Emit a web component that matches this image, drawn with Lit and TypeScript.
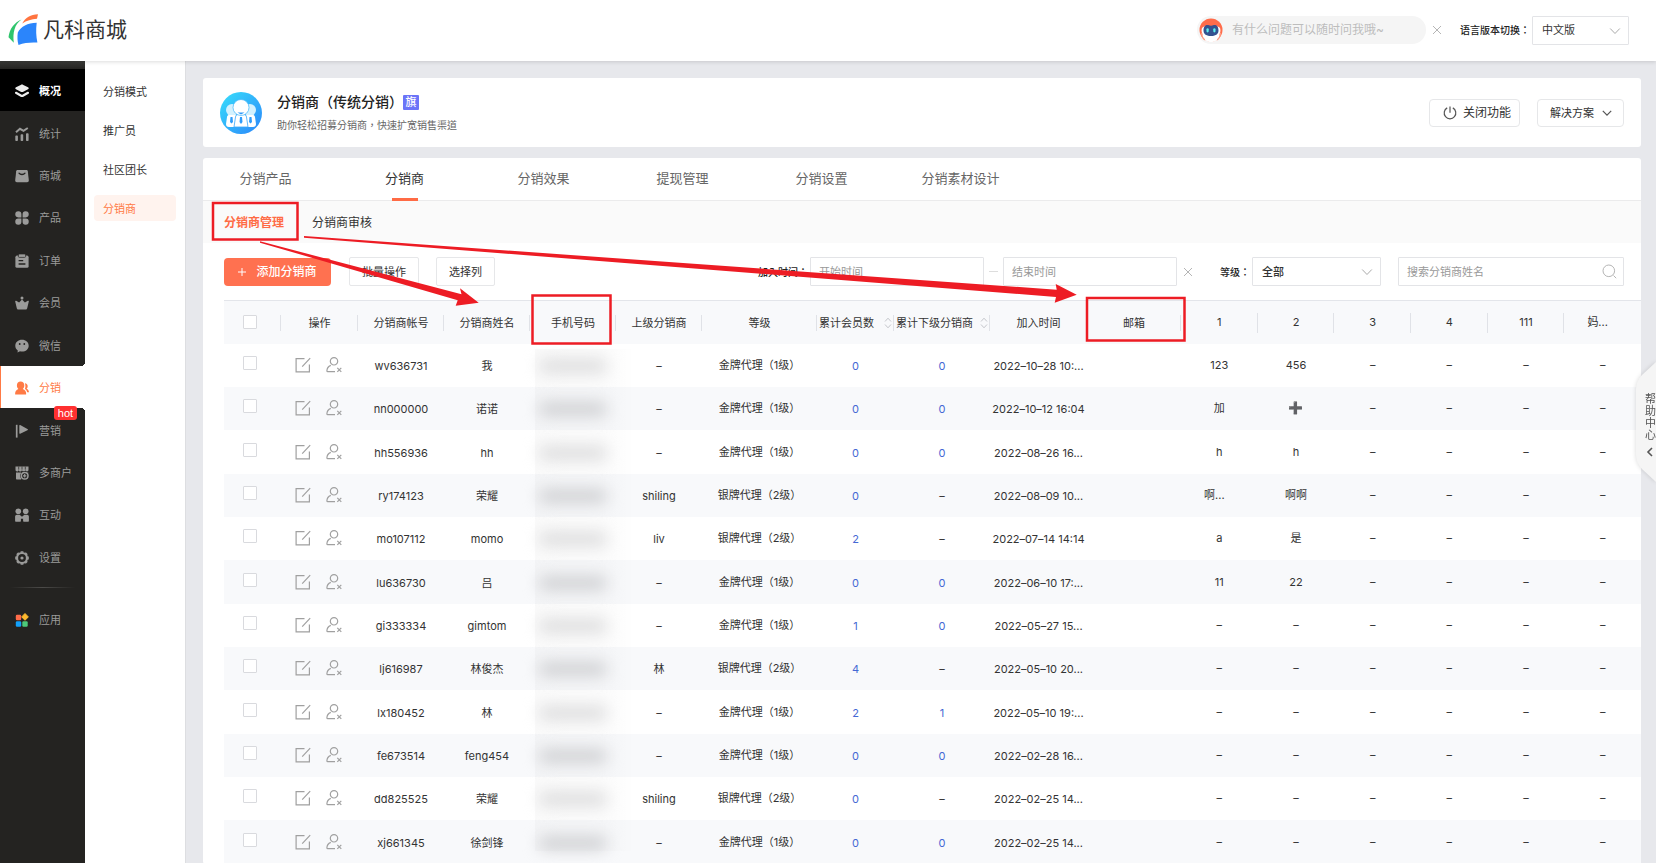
import { LitElement, html, css, svg, nothing } from 'lit';
import { customElement, property } from 'lit/decorators.js';
import { classMap } from 'lit/directives/class-map.js';

const ICONS: Record<string, unknown> = {
  overview: svg`<path d="M7 .6c.4 0 .9.1 1.300.300L13 3.300c1 .5 1 1.500 0 2L8.300 7.700c-.8.4-1.800.4-2.600 0L1 5.300c-1-.5-1-1.500 0-2L5.700.900C6.100.700 6.600.600 7 .600z" fill="currentColor"/><path d="M1 8.800l4.700 2.700c.8.5 1.800.5 2.600 0L13 8.800" fill="none" stroke="currentColor" stroke-width="2.200" stroke-linecap="round"/>`,
  stats: svg`<path d="M1 5.200L5 1.800l3.500 2L12.800 1" fill="none" stroke="currentColor" stroke-width="2"/><rect x=".3" y="8.600" width="2.600" height="5.400" rx=".8" fill="currentColor"/><rect x="5.600" y="7.300" width="2.600" height="6.700" rx=".8" fill="currentColor"/><rect x="11" y="6.200" width="2.600" height="7.800" rx=".8" fill="currentColor"/>`,
  mall: svg`<path d="M2.700 1h8.600c.8 0 1.400.5 1.500 1.300l1 9c.1 1.200-.6 2-1.700 2H1.900c-1.100 0-1.800-.8-1.700-2l1-9C1.300 1.500 1.900 1 2.700 1z" fill="currentColor"/><path d="M4 4.200c1.400 1.700 4.600 1.700 6 0" fill="none" stroke="#242321" stroke-width="1.300" stroke-linecap="round"/>`,
  product: svg`<g fill="currentColor"><path d="M3.300.3a3 3 0 013.100 3v3.100H3.300a3 3 0 010-6.100zM10.700.3a3 3 0 010 6.100H7.600V3.300a3 3 0 013.100-3zM3.300 13.700a3 3 0 010-6.100h3.100v3.100a3 3 0 01-3.100 3zM10.700 13.700a3 3 0 01-3.100-3V7.600h3.100a3 3 0 010 6.100z"/></g>`,
  order: svg`<rect x=".4" y="1.600" width="13.200" height="12.200" rx="1.600" fill="currentColor"/><rect x="3.400" y="0" width="7.200" height="3.400" rx="1" fill="currentColor" stroke="#242321" stroke-width=".7"/><path d="M3.600 6.600h4.600M3.600 10h6.800" stroke="#242321" stroke-width="1.400"/>`,
  member: svg`<circle cx="7" cy="1.900" r="1.500" fill="currentColor"/><path d="M1.200 4.800l2.900 1.800L7 3.600l2.900 3 2.900-1.800c.7-.3 1.200.1 1 .8l-1.600 6.600c-.2.900-.7 1.400-1.600 1.400H3.400c-.9 0-1.400-.5-1.600-1.400L.2 5.600c-.2-.7.300-1.100 1-.8z" fill="currentColor"/>`,
  wechat: svg`<path d="M7 .8c3.800 0 6.700 2.500 6.700 5.900S10.800 12.600 7 12.600c-.7 0-1.400-.1-2-.3l-2.500 1.300.3-2.200C1.200 10.300.3 8.600.3 6.700.3 3.300 3.200.8 7 .8z" fill="currentColor"/><circle cx="4.700" cy="5" r=".9" fill="#242321"/><circle cx="9.300" cy="5" r=".9" fill="#242321"/>`,
  distribution: svg`<path d="M5.600.4c2.200 0 3.700 1.600 3.700 3.800 0 1.600-.6 2.900-1.500 3.800 2.100.8 3.300 1.900 3.400 5 0 .4-.2.600-.6.600H.7c-.4 0-.6-.2-.6-.6C.2 9.900 1.400 8.800 3.400 8 2.500 7.100 1.900 5.800 1.900 4.200 1.900 2 3.400.4 5.600.4z" fill="currentColor"/><path d="M9.900 2.300c1.700.2 2.800 1.300 2.800 2.900 0 1-.4 1.900-1.100 2.600 1.400.6 2.200 1.500 2.400 3.400h-1.800c-.3-1.600-1.100-2.600-2.300-3.300.6-1.200.8-3.400 0-5.600z" fill="currentColor"/>`,
  marketing: svg`<path d="M1.700.8v12.800" stroke="currentColor" stroke-width="1.700"/><path d="M4.300 1.500c0-.5.400-.7.900-.5l7.200 4c.7.4.7.900 0 1.300L5.200 9.700c-.5.3-.9 0-.9-.4z" fill="currentColor"/>`,
  merchants: svg`<path d="M.5.600h13v3.200c0 .9-.7 1.700-1.600 1.700s-1.600-.6-1.600-1.500c0 .9-.8 1.500-1.700 1.500S7 4.900 7 4c0 .9-.8 1.500-1.700 1.500S3.700 4.900 3.700 4c0 .9-.7 1.500-1.600 1.500S.5 4.700.5 3.800z" fill="currentColor"/><path d="M3.700.6v3M7 .6v3M10.300.6v3" stroke="#242321" stroke-width=".7"/><path d="M1 6.500h5.200v7H2c-.6 0-1-.4-1-1z" fill="currentColor"/><path d="M11 6.200h2.200V8H11z" fill="currentColor"/><circle cx="9.700" cy="9.800" r="4.500" fill="#242321"/><circle cx="9.700" cy="9.800" r="3.300" fill="none" stroke="currentColor" stroke-width="1.500"/><path d="M8 9.800h3.400M9.700 8.100v3.400" stroke="currentColor" stroke-width="1.200"/>`,
  interact: svg`<g fill="currentColor"><circle cx="3.300" cy="3.200" r="2.800"/><circle cx="10.700" cy="3.200" r="2.800"/><path d="M2 6.700h2.600l2.400 2 2.400-2H12c1.100 0 1.900.8 1.900 1.900v4.100c0 .6-.4 1-1 1H9.100c-.6 0-1-.4-1-1v-1.900H5.900v1.900c0 .6-.4 1-1 1H1.100c-.6 0-1-.4-1-1V8.600c0-1.100.8-1.900 1.900-1.900z"/></g>`,
  settings: svg`<circle cx="7" cy="7" r="5" fill="none" stroke="currentColor" stroke-width="2.200"/><g stroke="currentColor" stroke-width="2.800"><path d="M7 .2v1.600M7 12.200v1.600M.2 7h1.600M12.200 7h1.600M2.200 2.200l1.100 1.100M10.700 10.700l1.100 1.100M11.800 2.200l-1.100 1.100M3.300 10.700l-1.100 1.100"/></g><circle cx="7" cy="7" r="1.600" fill="currentColor"/>`,
  apps: svg`<rect x=".8" y="1.800" width="5.400" height="5.400" rx="1.200" fill="#ff6c4a"/><path d="M10 .5l3.300 3.400L10 7.300 6.700 3.900z" fill="#fdb92e" stroke="#fdb92e" stroke-linejoin="round"/><rect x=".8" y="8.300" width="5.400" height="5.400" rx="1.200" fill="#12a0fa"/><rect x="7.300" y="8.300" width="5.400" height="5.400" rx="1.200" fill="#4cc97a"/>`,
};

@customElement('side-nav')
export class SideNav extends LitElement {
  static styles = css`
    :host { display: block; width: 85px; flex: none; background: #242321; color: #9b9b9a; }
    .list { list-style: none; margin: 0; padding: 8px 0 0; height: 517px; box-sizing: border-box;
      display: grid; grid-auto-rows: 1fr; background: linear-gradient(#3a3a38, #242321 8px); }
    .cell { display: grid; position: relative; }
    a { display: flex; align-items: center; gap: 10px; padding: 2px 0 0 15px; color: inherit;
      text-decoration: none; font-size: 11px; line-height: 16px; white-space: nowrap; }
    svg { width: 14px; height: 14px; flex: none; }
    .first a { background: #000; color: #fff; font-weight: 700; }
    .first svg { color: #ececec; }
    .current { background: #fff; }
    .current a { color: #ff7a45; border-left: 1px solid #ff7a45; padding-left: 14px; }
    .current::before, .current::after { content: ''; position: absolute; right: 0; width: 4px; height: 4px; }
    .current::before { top: -4px; background: radial-gradient(circle at 0 0, transparent 4px, #fff 4px); }
    .current::after { bottom: -4px; background: radial-gradient(circle at 0 100%, transparent 4px, #fff 4px); }
    .hot { position: absolute; top: -2px; left: 54px; width: 23px; height: 14px; border-radius: 3px; z-index: 1;
      background: #ff3030; color: #fff; text-align: center; font: 11px/14px "Liberation Sans", sans-serif; }
    .rule { height: 1px; border: 0; margin: 9px 10px 8px; background: linear-gradient(90deg, transparent, #4c4b49, transparent); }
    .apps { display: flex; height: 44px; }
  `;
  private items = [
    ['overview', '概况'], ['stats', '统计'], ['mall', '商城'], ['product', '产品'], ['order', '订单'],
    ['member', '会员'], ['wechat', '微信'], ['distribution', '分销'], ['marketing', '营销'],
    ['merchants', '多商户'], ['interact', '互动'], ['settings', '设置'],
  ];
  private icon(name: string) {
    return html`<svg viewBox="0 0 14 14" aria-hidden="true">${ICONS[name]}</svg>`;
  }
  render() {
    return html`<nav aria-label="主导航">
      <ul class="list">
        ${this.items.map(([id, label], i) => html`
          <li class=${classMap({ cell: true, first: i === 0, current: id === 'distribution' })}>
            <a href="#${id}">${this.icon(id)}${label}</a>
            ${id === 'marketing' ? html`<span class="hot">hot</span>` : nothing}
          </li>`)}
      </ul>
      <hr class="rule">
      <a class="apps" href="#apps">${this.icon('apps')}应用</a>
    </nav>`;
  }
}

interface Agent {
  account: string; name: string; parent: string; level: string;
  members: number; subs: string; joined: string; extra: string[];
}
const GOLD = '金牌代理（1级）';
const SILVER = '银牌代理（2级）';
const row = (account: string, name: string, parent: string, level: string, members: number,
  subs: string, joined: string, a = '–', b = '–'): Agent =>
  ({ account, name, parent, level, members, subs, joined, extra: [a, b, '–', '–', '–', '–'] });

const AGENTS: Agent[] = [
  row('wv636731', '我', '–', GOLD, 0, '0', '2022–10–28 10:...', '123', '456'),
  row('nn000000', '诺诺', '–', GOLD, 0, '0', '2022–10–12 16:04', '加', '➕'),
  row('hh556936', 'hh', '–', GOLD, 0, '0', '2022–08–26 16...', 'h', 'h'),
  row('ry174123', '荣耀', 'shiling', SILVER, 0, '–', '2022–08–09 10...', '啊...', '啊啊'),
  row('mo107112', 'momo', 'liv', SILVER, 2, '–', '2022–07–14 14:14', 'a', '是'),
  row('lu636730', '吕', '–', GOLD, 0, '0', '2022–06–10 17:...', '11', '22'),
  row('gi333334', 'gimtom', '–', GOLD, 1, '0', '2022–05–27 15...'),
  row('lj616987', '林俊杰', '林', SILVER, 4, '–', '2022–05–10 20...'),
  row('lx180452', '林', '–', GOLD, 2, '1', '2022–05–10 19:...'),
  row('fe673514', 'feng454', '–', GOLD, 0, '0', '2022–02–28 16...'),
  row('dd825525', '荣耀', 'shiling', SILVER, 0, '–', '2022–02–25 14...'),
  row('xj661345', '徐剑锋', '–', GOLD, 0, '0', '2022–02–25 14...'),
];

@customElement('agent-table')
export class AgentTable extends LitElement {
  @property({ attribute: false }) rows: Agent[] = AGENTS;
  static styles = css`
    :host { display: block; border-top: 1px solid #e3e5ea; }
    table { width: 100%; table-layout: fixed; border-collapse: collapse; font-size: 11px; line-height: 16px; color: #333; }
    th, td { padding: 0; font-weight: 400; text-align: center; white-space: nowrap; }
    td { padding-top: 1px; }
    .head { height: 43px; background: #f8f9fb; }
    .head th { background: linear-gradient(#e0e2e7, #e0e2e7) right center / 1px 16px no-repeat; }
    .head .custom { background-size: 1px 20px; padding-bottom: 2px; }
    .head th:last-child, .head .joined { background: none; }
    tbody tr { height: 43px; }
    tbody tr:nth-child(3n) { height: 44px; }
    tbody tr:nth-child(even) { background: #f8f9fb; }
    .pick { width: 57px; } .ops { width: 77px; } .text { width: 86px; } .level { width: 115px; }
    .members { width: 77px; } .subs { width: 96px; } .joined { width: 97px; } .mail { width: 94px; }
    .raised { padding-bottom: 2px; }
    .cut { display: inline-block; padding-right: 10px; }
    input { appearance: none; display: inline-block; vertical-align: middle; width: 14px; height: 14px; margin: 0 6px 2px 0;
      border: 1px solid #d9dade; border-radius: 1px; background: #fff; }
    td input { margin: 0 6px 6px 0; }
    .tools { display: flex; justify-content: center; gap: 15px; padding-right: 2px; }
    .tool { border: 0; padding: 0; background: none; width: 16px; height: 16px; color: #a0a0a0; }
    .tool svg { display: block; width: 16px; height: 16px; fill: none; stroke: currentColor; stroke-width: 1.2; }
    .sortable { display: flex; align-items: center; justify-content: space-between; padding: 0 2px; }
    .sort { border: 0; padding: 0; background: none; width: 8px; height: 12px; }
    .sort svg { display: block; width: 8px; height: 12px; fill: none; stroke: #c4c6cb; }
    .count { color: #4568d4; text-decoration: none; }
    .plus { font-family: "DejaVu Sans", sans-serif; font-size: 12px; }
    .phone { position: relative; }
    .phone::before { content: ''; position: absolute; left: 5px; width: 96px; top: 0; bottom: 0;
      background: linear-gradient(90deg, rgba(0,0,0,.02), rgba(0,0,0,.016) 70%, rgba(0,0,0,.002)); }
    tr:first-child .phone::before { top: 5px; }
    tr:last-child .phone::before { bottom: 13px; }
    .blur { position: relative; display: block; width: 68px; height: 12px; margin: 0 auto; border-radius: 6px; background: #d8d8d9; filter: blur(8px); }
    tr:nth-child(even) .blur { background: #c9cacd; }
  `;
  private sortButton(name: string) {
    return html`<button class="sort" aria-label="按${name}排序"><svg viewBox="0 0 8 12"><path d="M1 4.500L4 1.200l3 3.300M1 7.500l3 3.300 3-3.300"/></svg></button>`;
  }
  private text(value: string) {
    if (value === '➕') return html`<span class="plus">➕</span>`;
    return value.endsWith('...') ? html`<span class="cut">${value}</span>` : value;
  }
  render() {
    const custom = ['1', '2', '3', '4', '111', '妈...'];
    return html`<table>
      <thead><tr class="head">
        <th class="pick"><input type="checkbox" aria-label="全选"></th>
        <th class="ops">操作</th><th class="text">分销商帐号</th><th class="text">分销商姓名</th>
        <th class="text">手机号码</th><th class="text">上级分销商</th><th class="level">等级</th>
        <th class="members"><div class="sortable">累计会员数${this.sortButton('累计会员数')}</div></th>
        <th class="subs"><div class="sortable">累计下级分销商${this.sortButton('累计下级分销商')}</div></th>
        <th class="joined">加入时间</th><th class="mail">邮箱</th>
        ${custom.map((c) => html`<th class="custom">${this.text(c)}</th>`)}
      </tr></thead>
      <tbody>${this.rows.map((r) => html`<tr>
        <td><input type="checkbox" aria-label="选择 ${r.account}"></td>
        <td class="raised"><div class="tools">
          <button class="tool" aria-label="编辑"><svg viewBox="0 0 16 16"><path d="M9.500 1.600H1.100v13.300h13.300V7.500M15.200 1.200L7.200 9.700"/></svg></button>
          <button class="tool" aria-label="移除"><svg viewBox="0 0 16 16"><circle cx="8" cy="4.300" r="3.700"/><path d="M4.800 8.400C2.300 9.400 1 11.500.900 13.800c0 .6.300.9.800.9H9M11.300 10.800l4 4M15.300 10.800l-4 4"/></svg></button>
        </div></td>
        <td>${r.account}</td><td>${r.name}</td>
        <td class="phone"><span class="blur"></span></td>
        <td>${r.parent}</td><td class="raised">${r.level}</td>
        <td><a class="count" href="#members">${r.members}</a></td>
        <td>${r.subs === '–' ? '–' : html`<a class="count" href="#subs">${r.subs}</a>`}</td>
        <td>${r.joined}</td><td></td>
        ${r.extra.map((x) => html`<td class="raised">${this.text(x)}</td>`)}
      </tr>`)}</tbody>
    </table>`;
  }
}

@customElement('app-root')
export class AppRoot extends LitElement {
  static styles = css`
    :host { display: flex; flex-direction: column; height: 100vh; position: relative; overflow: hidden; background: #e7e8ec;
      color: #333; font-family: Inter, "Noto Sans CJK SC", sans-serif; font-size: 11px; line-height: 16px; }
    button, input, select { font: inherit; color: inherit; box-sizing: border-box; }
    .top { flex: none; display: flex; align-items: center; height: 61px; box-sizing: border-box; padding: 0 27px 1px 8px;
      background: #fff; box-shadow: 0 1px 4px rgba(0,0,0,.14); position: relative; z-index: 2; }
    .brand { display: flex; align-items: center; gap: 4px; margin-right: auto; text-decoration: none; color: #333;
      font-size: 21px; line-height: 30px; }
    .brand svg { width: 31px; height: 32px; }
    .ask { display: flex; align-items: center; gap: 9px; width: 229px; height: 28px; box-sizing: border-box; padding-left: 2px;
      border-radius: 14px; background: #f5f5f5; }
    .ask svg { width: 24px; height: 24px; flex: none; }
    .ask input { flex: 1; min-width: 0; border: 0; padding: 0; background: none; font-size: 12px; }
    .ask input::placeholder { color: #bdbdbd; opacity: 1; }
    .close { border: 0; background: none; padding: 0; width: 10px; height: 10px; margin: 0 6px; }
    .close svg { display: block; width: 10px; height: 10px; stroke: #b5b5b5; }
    .lang { margin: 0 2px 0 12px; }
    .label { font-family: Inter, "Noto Sans CJK TC", sans-serif; font-size: 10px; font-weight: 500; color: #222; white-space: nowrap; }
    .drop { position: relative; display: block; }
    .drop select { appearance: none; width: 100%; height: 29px; border: 1px solid #e3e4e7; border-radius: 1px; background: #fff; padding: 0 9px; }
    .drop svg { position: absolute; right: 8px; top: 9px; width: 12px; height: 12px; pointer-events: none; }
    .chev { fill: none; stroke: #aaa; }
    .lang-drop { width: 97px; }
    .body { flex: 1; display: flex; min-height: 0; }
    .sub { flex: none; width: 101px; background: #fff; border-right: 1px solid #dddee1; box-sizing: border-box; padding: 17px 9px 0 9px;
      display: flex; flex-direction: column; gap: 13px; }
    .sub a { padding: 6px 9px 4px; border-radius: 4px; color: #333; text-decoration: none; }
    .sub .on { background: #fff3ee; color: #ff7a45; }
    .main { flex: 1; min-width: 0; overflow: auto; scrollbar-width: none; padding: 17px 15px 0 17px; }
    .card { background: #fff; border-radius: 3px; }
    .intro { display: flex; align-items: center; height: 69px; padding: 0 17px; }
    .intro > svg { width: 42px; height: 42px; }
    .words { margin: 0 auto 0 15px; display: grid; gap: 7px; }
    h1 { margin: 0; font-size: 14px; line-height: 18px; font-weight: 500; color: #222; display: flex; align-items: center; }
    .badge { width: 16px; height: 15px; border-radius: 1px; background: #6b74f8; color: #fff; font-size: 11px; line-height: 15px; text-align: center; }
    .desc { margin: 0; font-family: Inter, "Noto Sans CJK TC", sans-serif; font-size: 10px; line-height: 14px; color: #666; }
    .btn { height: 29px; border: 1px solid #e6e7e9; background: #fff; border-radius: 2px; padding: 0 12px; white-space: nowrap; }
    .round { height: 28px; border-radius: 4px; display: flex; align-items: center; }
    .off { font-size: 12px; gap: 6px; padding: 0 8px 0 13px; margin-right: 17px; }
    .off svg { width: 14px; height: 14px; }
    .solve { gap: 8px; padding: 0 11px 0 12px; }
    .solve svg { width: 10px; height: 10px; }
    .dark { fill: none; stroke: #555; stroke-width: 1.200; }
    .panel { margin-top: 11px; }
    .tabs { display: flex; height: 42px; border-bottom: 1px solid #ebebec; }
    .tabs a { flex: 0 0 139px; text-align: center; font-size: 13px; line-height: 40px; color: #666; text-decoration: none; position: relative; left: -7px; }
    .tabs .on { color: #333; }
    .tabs .on::after { content: ''; position: absolute; left: 57px; width: 26px; height: 3px; bottom: -1px; background: #ff6b45; }
    .subtabs { display: flex; gap: 28px; height: 42px; box-sizing: border-box; align-items: center; padding: 2px 0 0 21px; background: #fafafa; font-size: 12px; }
    .subtabs a { color: #333; text-decoration: none; }
    .subtabs .on { color: #ff6b45; font-weight: 700; }
    .bar { display: flex; align-items: center; height: 57px; padding: 0 17px 0 21px; }
    .add { height: 28px; width: 107px; border: 0; border-radius: 4px; background: #ff7150; color: #fff; font-size: 12px; font-weight: 500; padding: 0;
      display: flex; align-items: center; justify-content: center; gap: 10px; margin-right: 18px; }
    .add svg { width: 8px; height: 8px; stroke: #fff; }
    .pick-cols { margin-left: 17px; }
    .date-label { margin-left: auto; margin-right: 2px; }
    .field { width: 174px; height: 29px; border: 1px solid #e3e4e7; border-radius: 1px; padding: 0 8px; background: #fff; }
    .field::placeholder { color: #999; opacity: 1; }
    .to { width: 9px; height: 1px; background: #ddd; margin: 0 5px; }
    .rank { margin-left: 21px; margin-right: 2px; }
    .rank-drop { width: 129px; font-weight: 500; margin-right: 17px; }
    .find { position: relative; display: block; width: 226px; }
    .find .field { width: 100%; }
    .find svg { position: absolute; right: 7px; top: 7px; width: 15px; height: 15px; fill: none; stroke: #b5b5b5; }
    .table { margin-left: 21px; }
    .help { position: absolute; right: 0; top: 361px; width: 20px; height: 123px; border: 0; padding: 4px 0 0 9px; background: none; z-index: 3;
      font-size: 11px; line-height: 12px; color: #555; text-align: left; filter: drop-shadow(0 0 2px rgba(0,0,0,.15)); }
    .help .shape { position: absolute; left: 0; top: 0; width: 20px; height: 123px; }
    .help span { position: relative; display: block; width: 11px; word-break: break-all; }
    .help .arrow { position: relative; display: block; width: 10px; height: 10px; margin-top: 6px; }
    .marks { position: absolute; left: 0; top: 0; width: 1656px; height: 863px; pointer-events: none; z-index: 4; }
    .frame { fill: none; stroke: #ed1c24; stroke-width: 2.500; }
    .arrowhead { fill: #ed1c24; }
  `;
  private chevron() {
    return html`<svg class="chev" viewBox="0 0 12 12"><path d="M1.200 3.500L6 8.500l4.800-5"/></svg>`;
  }
  private cross() {
    return html`<svg viewBox="0 0 10 10"><path d="M1 1l8 8M9 1L1 9"/></svg>`;
  }
  render() {
    const tabs = ['分销产品', '分销商', '分销效果', '提现管理', '分销设置', '分销素材设计'];
    return html`
      <header class="top">
        <a class="brand" href="#home"><svg viewBox="0 0 31 32" aria-hidden="true">
          <path d="M13.500 5.500C6.500 8.500 1.500 14.500.500 23.300l5.300 5.500C4.600 18.500 6.500 10.500 13.500 5.500z" fill="#2fc56d"/>
          <path d="M14.200 9.500C17.500 3.500 22.500.600 30 .200l-1 4.500C23.500 5 18.500 6.500 14.200 9.500z" fill="#ff7440"/>
          <path d="M9.800 18.500C13 12.500 19.500 9 28.700 8.800c-.9 7-.6 13.700.700 19.800-7-.4-13 .2-18.900 2.400-1.100-3.700-1.300-8-.7-12.500z" fill="#2b85fb"/></svg>凡科商城</a>
        <div class="ask">
          <svg viewBox="0 0 24 24" aria-hidden="true"><circle cx="12" cy="12" r="11.500" fill="#ff6c4a"/><path d="M3 17.500C5 22.500 8.500 24 12 24s7-1.500 9-6.500l-3-9.500H6z" fill="#fff"/><path d="M2.500 15c.2 3.500 1.500 5.600 3.300 7M21.500 15c-.2 3.500-1.500 5.600-3.300 7" stroke="#ff9c83" stroke-width="1.200" fill="none"/><rect x="2.600" y="8.500" width="18.800" height="8" rx="3.500" fill="#fff"/><path d="M8.500 7c1 0 1.500.7 3.500.7S14.500 7 15.500 7c3 0 4 2.500 4 5.500s-2 5.500-7.500 5.500-7.500-2.500-7.500-5.500S5.500 7 8.500 7z" fill="#35528f"/><rect x="7.500" y="10.200" width="2.200" height="4.200" rx="1.100" fill="#5ff0ee"/><rect x="14.300" y="10.200" width="2.200" height="4.200" rx="1.100" fill="#5ff0ee"/></svg>
          <input type="text" aria-label="提问" placeholder="有什么问题可以随时问我哦~">
        </div>
        <button class="close" aria-label="关闭">${this.cross()}</button>
        <label class="label lang" for="lang">语言版本切换：</label>
        <div class="drop lang-drop"><select id="lang"><option>中文版</option></select>${this.chevron()}</div>
      </header>
      <div class="body">
        <side-nav></side-nav>
        <nav class="sub" aria-label="分销">
          <a href="#mode">分销模式</a><a href="#promoter">推广员</a><a href="#leader">社区团长</a><a class="on" href="#agent">分销商</a>
        </nav>
        <main class="main">
          <section class="card intro">
            <svg viewBox="0 0 42 42" aria-hidden="true"><defs><linearGradient id="g" x1="0" y1="0" x2="1" y2="1"><stop offset="0" stop-color="#38dffb"/><stop offset="1" stop-color="#2b86fa"/></linearGradient></defs>
              <circle cx="21" cy="21" r="21" fill="url(#g)"/>
              <g fill="#d3f1fe"><circle cx="12" cy="18" r="6"/><circle cx="30" cy="18" r="6"/></g>
              <g fill="#fff"><path d="M6 32l1-7c.3-1.500 1-2 2.500-2h5c1.500 0 2.200.500 2.500 2l1 10H9c-2 0-3-1-3-3zM36 32l-1-7c-.3-1.500-1-2-2.500-2h-5c-1.500 0-2.200.500-2.500 2l-1 10h9c2 0 3-1 3-3z"/></g>
              <path d="M14 35l1.500-10c.3-1.500 1-2.500 2.500-2.500h6c1.500 0 2.200 1 2.500 2.500L28 35z" fill="#fff" stroke="#3aa8fb" stroke-width=".8"/>
              <circle cx="21" cy="15.500" r="8" fill="#fff" stroke="#3db4fb" stroke-width=".7"/>
              <path d="M17.500 20.500h7L21 22.500zM20 25h2l.500 5-1.500 2-1.500-2zM10.500 25h2l.500 5-1.500 1.500-1.500-1.500zM29.500 25h2l.500 5-1.500 1.500-1.500-1.500z" fill="#2f9cfa"/></svg>
            <div class="words">
              <h1>分销商（传统分销）<span class="badge">旗</span></h1>
              <p class="desc">助你轻松招募分销商，快速扩宽销售渠道</p>
            </div>
            <button class="btn round off"><svg class="dark" viewBox="0 0 14 14"><path d="M4.200 1.900a5.800 5.800 0 105.600 0M7 .500v6.300"/></svg>关闭功能</button>
            <button class="btn round solve">解决方案<svg class="dark" viewBox="0 0 10 10"><path d="M.8 2.800L5 7.200l4.200-4.400"/></svg></button>
          </section>
          <section class="card panel">
            <nav class="tabs">${tabs.map((t) => html`<a href="#tab" class=${classMap({ on: t === '分销商' })}>${t}</a>`)}</nav>
            <nav class="subtabs"><a class="on" href="#manage">分销商管理</a><a href="#audit">分销商审核</a></nav>
            <div class="bar">
              <button class="add"><svg viewBox="0 0 8 8"><path d="M4 0v8M0 4h8"/></svg>添加分销商</button>
              <button class="btn">批量操作</button>
              <button class="btn pick-cols">选择列</button>
              <label class="label date-label" for="from">加入时间：</label>
              <input class="field" id="from" placeholder="开始时间">
              <span class="to"></span>
              <input class="field" aria-label="结束时间" placeholder="结束时间">
              <button class="close" aria-label="清除">${this.cross()}</button>
              <label class="label rank" for="rank">等级：</label>
              <div class="drop rank-drop"><select id="rank"><option>全部</option></select>${this.chevron()}</div>
              <div class="find"><input class="field" type="text" aria-label="搜索分销商姓名" placeholder="搜索分销商姓名">
                <svg viewBox="0 0 15 15"><circle cx="6.800" cy="6.800" r="5.800"/><path d="M11.500 11.500l2.700 2.700"/></svg></div>
            </div>
            <agent-table class="table"></agent-table>
          </section>
        </main>
      </div>
      <button class="help">
        <svg class="shape" viewBox="0 0 20 123"><path d="M20 1L6 14C2 18 0 23 0 29v64c0 6 2 11 6 15l14 13z" fill="#f5f5f5"/></svg>
        <span>帮助中心</span>
        <svg class="arrow dark" viewBox="0 0 10 10"><path d="M7 1L3 5l4 4" stroke-width="1.600"/></svg>
      </button>
      <svg class="marks" viewBox="0 0 1656 863" aria-hidden="true">
        <rect class="frame" x="213" y="203" width="84.500" height="36.500"/>
        <rect class="frame" x="532.500" y="295.500" width="78" height="48"/>
        <rect class="frame" x="1087" y="298" width="97.500" height="42.500"/>
        <path class="arrowhead" d="M260 241.300L461.500 294.300 460 288.300 478.700 302.700 455.700 305.700 457.700 300.200 260 242.700z"/>
        <path class="arrowhead" d="M304 236L1056.700 289.700 1055.700 284 1076.700 294.700 1054.700 302.700 1056 297 304 237.700z"/>
      </svg>`;
  }
}
